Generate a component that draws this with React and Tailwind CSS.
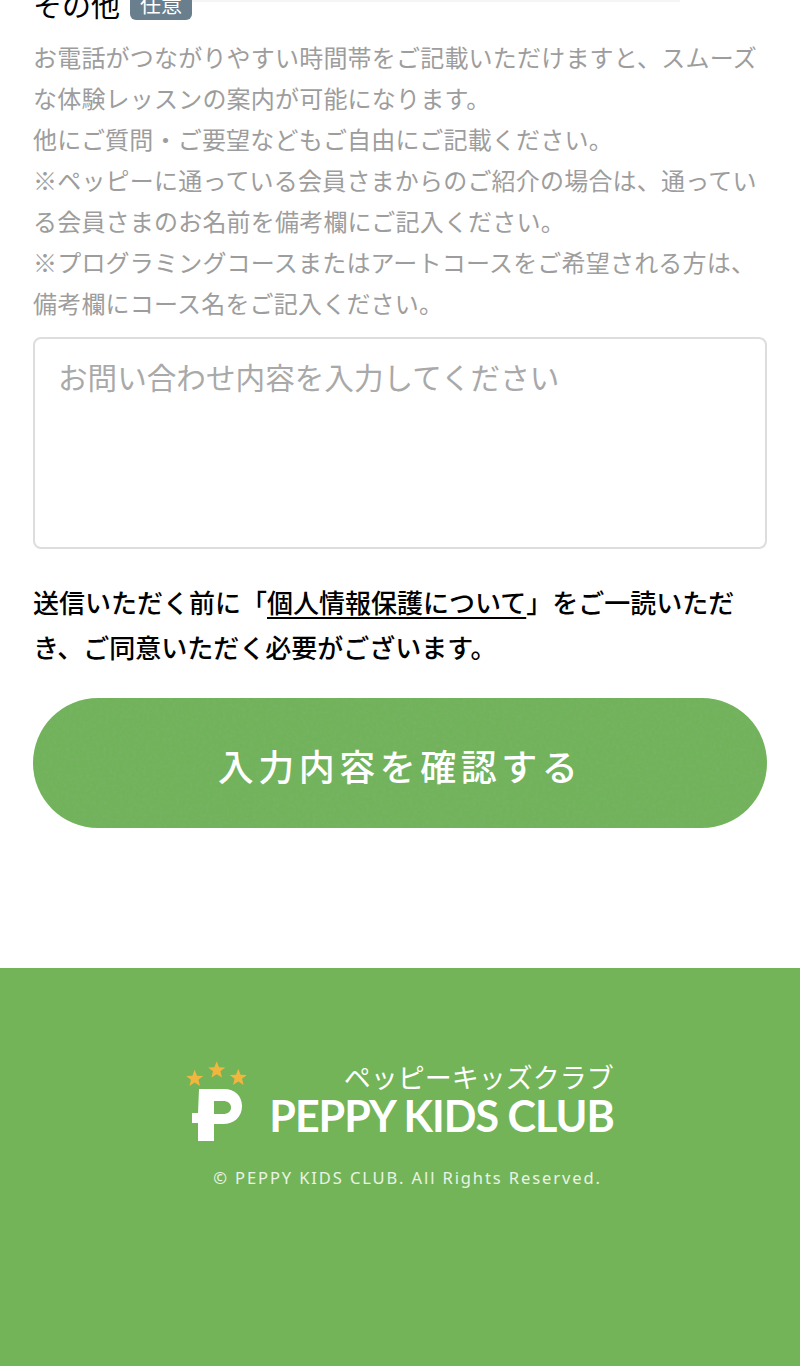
import React from 'react';

const font = { fontFamily: '"Noto Sans CJK JP", sans-serif' };

function Star({ x, y }) {
  return (
    <polygon
      transform={`translate(${x} ${y})`}
      fill="#f2b63f"
      points="0,-9 2.3,-3 8.6,-2.8 3.7,1 5.3,7.3 0,3.9 -5.3,7.3 -3.7,1 -8.6,-2.8 -2.3,-3"
    />
  );
}

function Logo() {
  return (
    <div className="flex items-start">
      <svg width="64" height="84" viewBox="0 0 64 84" className="mt-[-2px]">
        <Star x={8.7} y={18.7} />
        <Star x={30.7} y={10.3} />
        <Star x={52.3} y={17.7} />
        <path
          fill="#fff"
          fillRule="evenodd"
          d="M13 29 H38 C49 29 56 36 56 46 C56 57 48 64 37 64 H28 V81 H12 V63 H6 V53 H12 Z M28 41 V54 H37 C42 54 45 51.5 45 47.5 C45 43.5 42 41 37 41 Z"
        />
      </svg>
      <div className="ml-[19px] flex flex-col items-end">
        <p className="text-[27px] leading-[30px] text-white">ペッピーキッズクラブ</p>
        <p className="mt-[2px] text-[43px] leading-[44px] font-bold text-white whitespace-nowrap tracking-[-1px]" style={{ fontFamily: 'Lato, sans-serif' }}>
          PEPPY KIDS CLUB
        </p>
      </div>
    </div>
  );
}

// paper-like grain on the button
function Grain() {
  return (
    <svg className="absolute inset-0 h-full w-full opacity-[0.3]" aria-hidden="true">
      <filter id="grain">
        <feTurbulence type="fractalNoise" baseFrequency="0.3" numOctaves="3" seed="4" />
        <feColorMatrix values="0 0 0 0 0.25  0 0 0 0 0.45  0 0 0 0 0.2  0 0 0 1.8 -0.5" />
      </filter>
      <rect width="100%" height="100%" filter="url(#grain)" />
    </svg>
  );
}

export default function App() {
  return (
    <div className="w-[800px] h-[1366px] overflow-hidden bg-white" style={font}>
      <div className="ml-[130px] mr-[120px] h-[2px] bg-[#f5f5f5]" />
      <div className="mt-[-12px] px-[33px]">
        <div className="flex items-center gap-[10px] h-[30px]">
          <span className="text-[29px] leading-[30px] mt-[-2px] text-black">その他</span>
          <span className="rounded-[6px] bg-[#6a7f8e] px-[10px] h-[30px] leading-[26px] text-[21px] text-white">任意</span>
        </div>
        <p className="mt-[16px] text-[24px] leading-[41px] tracking-[0.2px] text-[#9d9d9d]">
          お電話がつながりやすい時間帯をご記載いただけますと、スムーズな体験レッスンの案内が可能になります。<br />
          他にご質問・ご要望などもご自由にご記載ください。<br />
          ※ペッピーに通っている会員さまからのご紹介の場合は、通っている会員さまのお名前を備考欄にご記入ください。<br />
          ※プログラミングコースまたはアートコースをご希望される方は、備考欄にコース名をご記入ください。
        </p>
        <textarea
          readOnly
          placeholder="お問い合わせ内容を入力してください"
          className="mt-[14px] block h-[212px] w-full resize-none rounded-[8px] border-2 border-[#dddddd] px-[23px] py-[18px] text-[29.6px] leading-[40px] placeholder:text-[#a9a9a9] outline-none"
        />
        <p className="mt-[30px] text-[26px] leading-[45px] font-medium text-black">
          送信いただく前に「<a className="underline underline-offset-[4px]">個人情報保護について</a>」をご一読いただき、ご同意いただく必要がございます。
        </p>
        <button className="relative mt-[29px] block h-[130px] w-full overflow-hidden rounded-full bg-[#70b359] pt-[4px] text-[36px] font-medium tracking-[4.5px] text-white">
          <Grain />
          <span className="relative">入力内容を確認する</span>
        </button>
      </div>
      <footer className="mt-[140px] h-[398px] bg-[#72b457] pt-[94px] flex flex-col items-center">
        <Logo />
        <p className="mt-[22px] ml-[15px] text-[16.5px] leading-[24px] tracking-[1.9px] text-white/85" style={{ fontFamily: '"Noto Sans", sans-serif' }}>
          © PEPPY KIDS CLUB. All Rights Reserved.
        </p>
      </footer>
    </div>
  );
}
